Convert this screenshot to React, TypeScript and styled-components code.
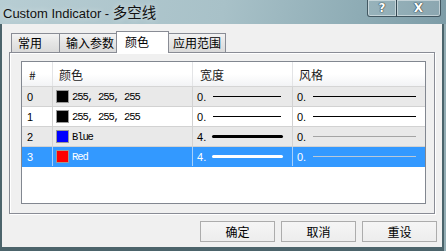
import React from "react"
import styled, { createGlobalStyle } from "styled-components"

const GlobalStyle = createGlobalStyle`
  html, body {
    margin: 0;
    padding: 0;
  }
  body {
    width: 446px;
    height: 251px;
    overflow: hidden;
    font-family: "Liberation Sans", "Noto Sans CJK SC", sans-serif;
  }
`

const cjk = `"Noto Sans CJK SC", "Liberation Sans", sans-serif`

const Window = styled.div`
  width: 446px;
  height: 251px;
  display: flex;
  flex-direction: column;
`

const TitleBar = styled.div`
  height: 24px;
  flex: none;
  display: flex;
  justify-content: space-between;
  align-items: flex-start;
  background: linear-gradient(100deg, #b7cdd3 0%, #a8c1c8 50%, #8eacb5 80%, #7d9ca7 100%);
  padding-right: 5px;
  box-sizing: border-box;
`

const Title = styled.div`
  padding-left: 3px;
  line-height: 23px;
  font-family: "Liberation Sans", sans-serif;
  font-size: 13px;
  color: #111;
  text-shadow: 0 0 6px rgba(255, 255, 255, 0.6);
  white-space: nowrap;
`

const TitleCjk = styled.span`
  font-family: ${cjk};
  font-size: 14.5px;
`

const CaptionButtons = styled.div`
  display: flex;
`

const CaptionButton = styled.div<{ $w: number }>`
  width: ${(p) => p.$w}px;
  height: 17px;
  box-sizing: border-box;
  border: 1px solid rgba(45, 65, 75, 0.8);
  border-top: none;
  margin-left: -1px;
  box-shadow: inset 0 0 0 1px rgba(255, 255, 255, 0.45);
  background: rgba(255, 255, 255, 0.1);
  display: flex;
  align-items: center;
  justify-content: center;
  font-family: "DejaVu Sans", sans-serif;
  font-weight: bold;
  font-size: 12px;
  color: #fff;
  text-shadow: 0 0 1px #2c3e46, 0 0 1px #2c3e46, 0 0 1px #2c3e46;

  &:first-child {
    border-bottom-left-radius: 3px;
  }
  &:last-child {
    border-bottom-right-radius: 3px;
  }
`

const Frame = styled.div`
  flex: 1;
  display: flex;
  padding: 0 4px 4px 2px;
  background: linear-gradient(to right, #4c646b 0, #4c646b 444px, #93adb4 444px);
`

const Client = styled.div`
  flex: 1;
  display: flex;
  flex-direction: column;
  background: #f0f0f0;
  padding: 7px 5px 5px 7px;
`

const TabStrip = styled.div`
  height: 21px;
  flex: none;
  display: flex;
  align-items: flex-end;
  padding-left: 2px;
  position: relative;
  z-index: 1;
`

const Tab = styled.div<{ $active?: boolean }>`
  box-sizing: border-box;
  min-width: ${(p) => (p.$active ? 53 : 49)}px;
  height: ${(p) => (p.$active ? 22 : 19)}px;
  margin: ${(p) => (p.$active ? "0 -2px -1px -3px" : "0 0 0 -1px")};
  padding: 0 4px 0 ${(p) => (p.$active ? 8 : 6)}px;
  border: 1px solid #898c95;
  border-bottom: none;
  background: ${(p) =>
    p.$active ? "#ffffff" : "linear-gradient(#f3f3f3, #e6e6e6 45%, #dadada)"};
  position: relative;
  z-index: ${(p) => (p.$active ? 2 : 1)};
  font-family: ${cjk};
  font-size: 12px;
  line-height: ${(p) => (p.$active ? 19 : 18)}px;
  color: #000;
  white-space: nowrap;

  &:first-child {
    margin-left: 0;
  }
`

const Panel = styled.div`
  height: 162px;
  box-sizing: border-box;
  flex: none;
  margin-right: 2px;
  border: 1px solid #898c95;
  box-shadow: inset 1px 1px 0 #fff, 1px 1px 0 #fff;
  background: #f0f0f0;
  padding: 8px 8px 9px 11px;
  display: flex;
`

const ListBox = styled.div`
  flex: 1;
  border: 1px solid #828790;
  background: #fff;
  display: flex;
  flex-direction: column;
`

const columns = "31px 140px 100px 1fr"

const HeaderRow = styled.div`
  height: 25px;
  box-sizing: border-box;
  display: grid;
  grid-template-columns: ${columns};
  background: linear-gradient(#ffffff, #ffffff 50%, #f2f3f5);
  border-bottom: 1px solid #d5d5d5;
`

const HeaderCell = styled.div<{ $pad: number }>`
  display: flex;
  align-items: center;
  padding-left: ${(p) => p.$pad}px;
  border-right: 1px solid #e3e4e6;
  font-family: ${cjk};
  font-size: 12px;
  color: #1a1a1a;

  &:last-child {
    border-right: none;
  }
`

const Row = styled.div<{ $bg: string; $selected?: boolean }>`
  height: 20px;
  box-sizing: border-box;
  display: grid;
  grid-template-columns: ${columns};
  background: ${(p) => p.$bg};
  color: ${(p) => (p.$selected ? "#fff" : "#000")};
  border-bottom: 1px solid ${(p) => (p.$selected ? "#3399ff" : "#d2d2d2")};
`

const Cell = styled.div<{ $pad: number; $selected?: boolean }>`
  display: flex;
  align-items: center;
  padding-left: ${(p) => p.$pad}px;
  border-right: 1px solid ${(p) => (p.$selected ? "#a9d1fb" : "#d2d2d2")};
  font-size: 11px;

  &:last-child {
    border-right: none;
  }
`

const Swatch = styled.div<{ $color: string }>`
  width: 13px;
  height: 13px;
  box-sizing: border-box;
  border: 1px solid #9a9a9a;
  background: ${(p) => p.$color};
  margin-right: 3px;
`

const ColorName = styled.span`
  font-family: "Liberation Mono", monospace;
  font-size: 10.5px;
  letter-spacing: -1.1px;
`

const Value = styled.span`
  width: 16px;
  flex: none;
`

const Line = styled.div<{ $w: number; $h: number; $color: string }>`
  width: ${(p) => p.$w}px;
  height: ${(p) => p.$h}px;
  background: ${(p) => p.$color};
  border-radius: ${(p) => (p.$h > 1 ? 1.5 : 0)}px;
  margin-left: ${(p) => (p.$h > 1 ? -1 : 0)}px;
`

const ButtonRow = styled.div`
  margin-top: 7px;
  display: flex;
  justify-content: flex-end;
  gap: 6px;
`

const Button = styled.button`
  width: 75px;
  height: 21px;
  box-sizing: border-box;
  border: 1px solid #acacac;
  border-radius: 0;
  background: linear-gradient(#f5f5f5, #ededed);
  font-family: ${cjk};
  font-size: 12px;
  color: #000;
  padding: 0;
`

type Item = {
  swatch: string
  name: string
  width: number
  thick: boolean
  styleColor: string
  widthColor: string
}

const items: Item[] = [
  { swatch: "#000", name: "255, 255, 255", width: 0, thick: false, styleColor: "#000", widthColor: "#000" },
  { swatch: "#000", name: "255, 255, 255", width: 0, thick: false, styleColor: "#000", widthColor: "#000" },
  { swatch: "#0000ff", name: "Blue", width: 4, thick: true, styleColor: "#a4a4a4", widthColor: "#000" },
  { swatch: "#ff0000", name: "Red", width: 4, thick: true, styleColor: "#b9c9d9", widthColor: "#fff" },
]

const App: React.FC = () => {
  return (
    <>
      <GlobalStyle />
      <Window>
        <TitleBar>
          <Title>
            Custom Indicator - <TitleCjk>多空线</TitleCjk>
          </Title>
          <CaptionButtons>
            <CaptionButton $w={30}>?</CaptionButton>
            <CaptionButton $w={45}>X</CaptionButton>
          </CaptionButtons>
        </TitleBar>
        <Frame>
          <Client>
            <TabStrip>
              <Tab>常用</Tab>
              <Tab>输入参数</Tab>
              <Tab $active>颜色</Tab>
              <Tab>应用范围</Tab>
            </TabStrip>
            <Panel>
              <ListBox>
                <HeaderRow>
                  <HeaderCell $pad={7}>#</HeaderCell>
                  <HeaderCell $pad={6}>颜色</HeaderCell>
                  <HeaderCell $pad={7}>宽度</HeaderCell>
                  <HeaderCell $pad={6}>风格</HeaderCell>
                </HeaderRow>
                {items.map((it, i) => {
                  const selected = i === 3
                  const bg = selected ? "#3399ff" : i % 2 === 0 ? "#e9e9e9" : "#ffffff"
                  return (
                    <Row key={i} $bg={bg} $selected={selected}>
                      <Cell $pad={5} $selected={selected}>{i}</Cell>
                      <Cell $pad={3} $selected={selected}>
                        <Swatch $color={it.swatch} />
                        <ColorName>{it.name}</ColorName>
                      </Cell>
                      <Cell $pad={4} $selected={selected}>
                        <Value>{it.width}.</Value>
                        <Line
                          $w={it.thick ? 71 : 68}
                          $h={it.thick ? 3 : 1}
                          $color={it.widthColor}
                        />
                      </Cell>
                      <Cell $pad={4} $selected={selected}>
                        <Value>0.</Value>
                        <Line $w={103} $h={1} $color={it.styleColor} />
                      </Cell>
                    </Row>
                  )
                })}
              </ListBox>
            </Panel>
            <ButtonRow>
              <Button>确定</Button>
              <Button>取消</Button>
              <Button>重设</Button>
            </ButtonRow>
          </Client>
        </Frame>
      </Window>
    </>
  )
}

export default App
